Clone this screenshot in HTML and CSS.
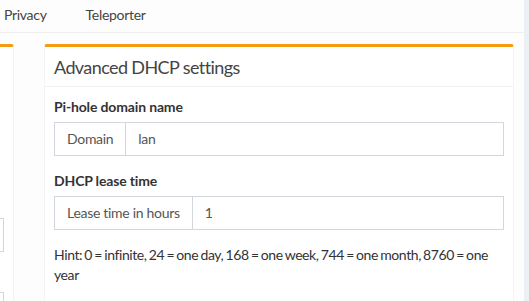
FILE: index.html
```html
<!DOCTYPE html>
<html>
<head>
<meta charset="utf-8">
<link rel="stylesheet" href="styles.css">
</head>
<body>
<div class="page">
  <div class="content">
    <nav class="tabs">
      <span class="tab">Privacy</span>
      <span class="tab">Teleporter</span>
    </nav>
    <div class="row">
      <div class="side-box">
        <div class="side-body">
          <div class="side-input"></div>
          <div class="side-input second"></div>
        </div>
      </div>
      <section class="box">
        <header class="box-header">Advanced DHCP settings</header>
        <div class="box-body">
          <div class="form-group">
            <label class="label">Pi-hole domain name</label>
            <div class="input-group">
              <span class="addon">Domain</span>
              <span class="input">lan</span>
            </div>
          </div>
          <div class="form-group">
            <label class="label">DHCP lease time</label>
            <div class="input-group">
              <span class="addon">Lease time in hours</span>
              <span class="input">1</span>
            </div>
          </div>
          <p class="hint">Hint: 0 = infinite, 24 = one day, 168 = one week, 744 = one month, 8760 = one year</p>
        </div>
      </section>
    </div>
  </div>
  <div class="gutter"></div>
</div>
</body>
</html>
```
FILE: styles.css
```css
html, body {
  margin: 0;
  padding: 0;
}
body {
  font-family: "Lato", "Liberation Sans", sans-serif;
  font-size: 14px;
  line-height: 20px;
  letter-spacing: -0.3px;
  color: #333;
  background: #fcfcfc;
}
.page {
  display: flex;
  width: 529px;
  height: 301px;
  overflow: hidden;
}
.content {
  flex: 0 0 524px;
  background: #fdfdfd;
}
.gutter {
  flex: 1;
  background: #ecf0f5;
}
.tabs {
  display: flex;
  gap: 39px;
  height: 33px;
  padding-left: 4px;
  align-items: center;
  border-bottom: 1px solid #f0f0f0;
  font-size: 14px;
  color: #444;
  box-sizing: border-box;
  padding-bottom: 3px;
}
.row {
  display: flex;
  gap: 30px;
  margin-top: 11px;
  align-items: flex-start;
}
.side-box {
  flex: 0 0 14px;
  height: 270px;
  border-top: 3px solid #f39c12;
  border-top-right-radius: 3px;
  background: #fff;
  border-right: 1px solid #f2f2f2;
  box-sizing: border-box;
  overflow: hidden;
}
.side-body {
  padding-top: 171px;
}
.side-input {
  width: 3px;
  height: 32px;
  border: 1px solid #d2d6de;
  border-left: none;
}
.side-input.second {
  margin-top: 40px;
}
.box {
  flex: 0 0 470px;
  height: 270px;
  background: #fff;
  border-top: 3px solid #f39c12;
  border-radius: 3px 3px 0 0;
  border-left: 1px solid #f4f4f4;
  border-right: 1px solid #f4f4f4;
  box-sizing: border-box;
}
.box-header {
  height: 40px;
  padding: 0 9px;
  display: flex;
  align-items: center;
  font-size: 18px;
  letter-spacing: -0.6px;
  color: #444;
  border-bottom: 1px solid #f0f0f0;
  box-sizing: border-box;
}
.box-body {
  padding: 10px 9px;
}
.form-group {
  margin-bottom: 15px;
}
.label {
  display: block;
  font-weight: bold;
  letter-spacing: -0.15px;
  margin-bottom: 5px;
  color: #333;
}
.input-group {
  display: flex;
  height: 34px;
  border: 1px solid #d2d6de;
  box-sizing: border-box;
  width: 450px;
}
.addon {
  display: flex;
  align-items: center;
  padding: 0 12px;
  border-right: 1px solid #d2d6de;
  color: #555;
}
.input {
  display: flex;
  align-items: center;
  padding: 0 12px;
  color: #555;
}
.hint {
  margin: 12px 0 0;
  width: 450px;
  letter-spacing: -0.4px;
  word-spacing: -1px;
  color: #333;
}
```
